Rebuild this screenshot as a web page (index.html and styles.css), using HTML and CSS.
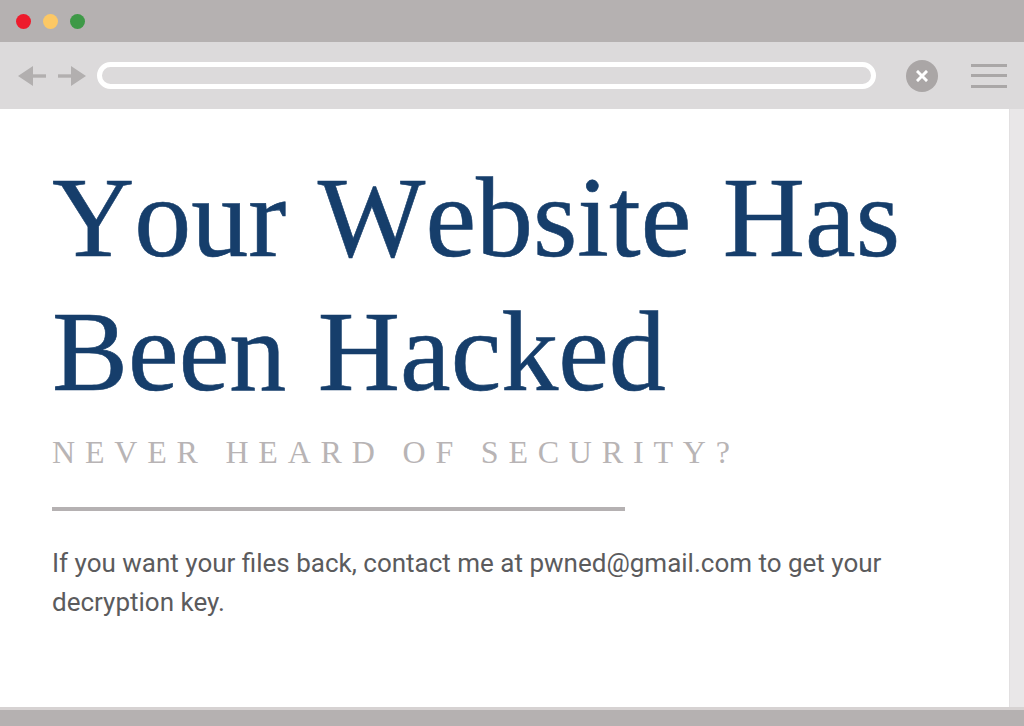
FILE: index.html
```html
<!DOCTYPE html>
<html>
<head>
<meta charset="utf-8">
<link rel="stylesheet" href="styles.css">
</head>
<body>
<div class="window">
  <div class="titlebar">
    <span class="dot red"></span>
    <span class="dot yellow"></span>
    <span class="dot green"></span>
  </div>
  <div class="toolbar">
    <div class="nav">
      <svg class="arrow" width="28" height="20" viewBox="0 0 28 20"><polygon points="0,10 15,0 15,20" /><rect x="14" y="8.3" width="14" height="3.4"/></svg>
      <svg class="arrow" width="28" height="20" viewBox="0 0 28 20"><polygon points="28,10 13,0 13,20" /><rect x="0" y="8.3" width="14" height="3.4"/></svg>
    </div>
    <div class="address"></div>
    <div class="close">
      <svg width="12" height="12" viewBox="0 0 12 12"><path d="M2 2 L10 10 M10 2 L2 10" stroke="#fff" stroke-width="3" stroke-linecap="square"/></svg>
    </div>
    <div class="menu">
      <span></span><span></span><span></span>
    </div>
  </div>
  <div class="main">
    <div class="content">
      <h1 class="title">Your Website Has<br>Been Hacked</h1>
      <p class="subtitle">NEVER HEARD OF SECURITY?</p>
      <div class="divider"></div>
      <p class="message">If you want your files back, contact me at pwned@gmail.com to get your decryption key.</p>
    </div>
    <div class="scrollbar"></div>
  </div>
  <div class="bottombar"></div>
</div>
</body>
</html>
```

FILE: styles.css
```css
html, body {
  margin: 0;
  padding: 0;
  background: #ffffff;
}
.window {
  width: 1024px;
  height: 726px;
  display: flex;
  flex-direction: column;
  overflow: hidden;
}
.titlebar {
  height: 42px;
  background: #b5b1b1;
  display: flex;
  align-items: center;
  gap: 12px;
  padding-left: 16px;
  box-sizing: border-box;
}
.dot {
  width: 15px;
  height: 15px;
  border-radius: 50%;
  display: block;
}
.red { background: #ee1b2c; }
.yellow { background: #fcc865; }
.green { background: #3e9947; }

.toolbar {
  height: 67px;
  background: #dcdadb;
  display: flex;
  align-items: center;
  padding: 0 17px 0 18px;
  box-sizing: border-box;
}
.nav {
  display: flex;
  gap: 12px;
  align-items: center;
}
.arrow {
  display: block;
  fill: #b2afaf;
}
.address {
  flex: 1;
  margin-left: 11px;
  height: 27px;
  border: 5px solid #ffffff;
  border-radius: 18px;
  background: #dcdadb;
  box-sizing: border-box;
}
.close {
  width: 32px;
  height: 32px;
  border-radius: 50%;
  background: #aaa6a6;
  margin-left: 30px;
  display: flex;
  align-items: center;
  justify-content: center;
}
.close svg { display: block; }
.menu {
  margin-left: 33px;
  width: 36px;
  display: flex;
  flex-direction: column;
  gap: 7.5px;
}
.menu span {
  display: block;
  height: 3px;
  background: #aaa7a7;
}

.main {
  flex: 1;
  display: flex;
  min-height: 0;
}
.content {
  flex: 1;
  background: #ffffff;
  padding: 42px 0 0 52px;
  box-sizing: border-box;
}
.scrollbar {
  width: 15px;
  background: #e9e7e8;
  border-left: 1px solid #e2e0e1;
  box-sizing: border-box;
}
.title {
  margin: 0;
  font-family: "Liberation Serif", "Times New Roman", serif;
  font-weight: normal;
  font-size: 114px;
  line-height: 134px;
  color: #163e6b;
  font-kerning: none;
  word-spacing: 3px;
  -webkit-text-stroke: 0.6px #163e6b;
}
.subtitle {
  margin: 13px 0 0;
  font-family: "Liberation Serif", "Times New Roman", serif;
  font-size: 32px;
  line-height: 40px;
  letter-spacing: 9.8px;
  color: #b8b4b5;
  font-kerning: none;
}
.divider {
  margin-top: 35px;
  width: 573px;
  height: 4px;
  background: #b5b1b2;
}
.message {
  margin: 33px 0 0;
  max-width: 880px;
  font-family: Roboto, "Noto Sans", sans-serif;
  font-size: 26px;
  line-height: 39px;
  color: #5b5b5d;
}
.bottombar {
  height: 19px;
  background: #b5b1b1;
  border-top: 3px solid #d6d2d2;
  box-sizing: border-box;
}
```
